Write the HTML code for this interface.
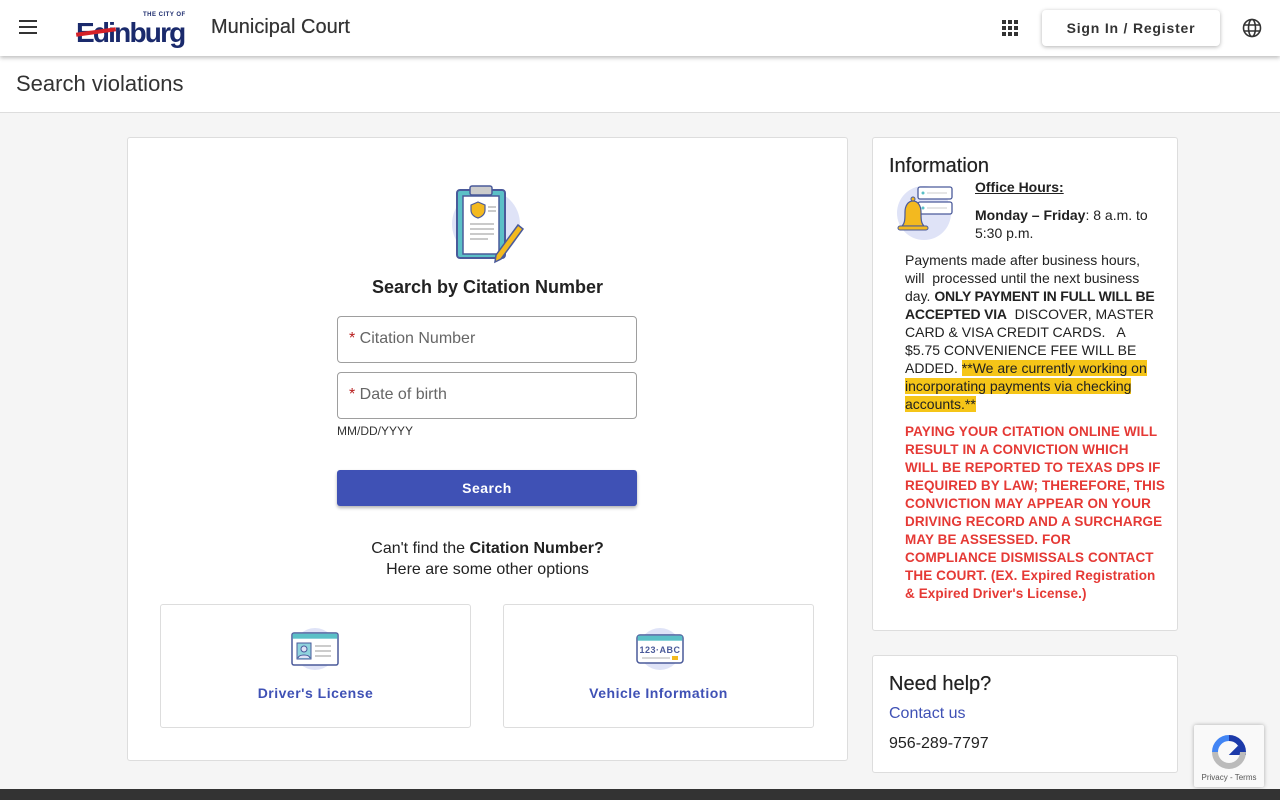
<!DOCTYPE html>
<html><head><meta charset="utf-8"><style>
*{box-sizing:border-box;margin:0;padding:0}
body{width:1280px;height:800px;overflow:hidden;background:#f5f5f5;font-family:"Liberation Sans",Roboto,sans-serif;color:#212121;position:relative}
.hdr{position:absolute;left:0;top:0;width:1280px;height:56px;background:#fff;box-shadow:0 2px 4px rgba(0,0,0,.25);z-index:2}
.ttl{position:absolute;left:0;top:56px;width:1280px;height:57px;background:#fff;border-bottom:1px solid #ddd}
.card{position:absolute;background:#fff;border:1px solid #ddd;border-radius:3px}
.inp{position:absolute;left:337px;width:300px;height:47px;border:1px solid #9e9e9e;border-radius:4px;font-size:16px;color:#666;padding:13px 11px}
.inp b{color:#b71c1c;font-weight:normal}
.opt{position:absolute;top:604px;width:311px;height:124px;border:1px solid #ddd;border-radius:3px;background:#fff;text-align:center;color:#3f51b5;font-size:14px;font-weight:bold;letter-spacing:.5px}
.info{font-size:14px;line-height:18px;letter-spacing:0}
.red{color:#e53935;font-weight:bold;letter-spacing:.1px;white-space:nowrap}
</style></head><body>
<div class="hdr">
 <div style="position:absolute;left:19px;top:20px;width:18px;height:2px;background:#333;box-shadow:0 6px 0 #333,0 12px 0 #333"></div>
 <div style="position:absolute;left:76px;top:8px;width:120px;height:40px">
  <div style="position:absolute;left:67px;top:4px;font-size:6px;color:#1a2a6c;letter-spacing:.5px;font-weight:bold">THE CITY OF</div>
  <div style="position:absolute;left:0;top:9px;font-size:28px;font-weight:bold;color:#1a2a6c;letter-spacing:-1.8px;font-family:'Liberation Sans',sans-serif">Edinburg</div>
  <div style="position:absolute;left:0;top:22px;width:40px;height:4px;background:#d42027;transform:rotate(-8deg)"></div>
 </div>
 <div style="position:absolute;left:211px;top:16px;font-size:20px;color:#333;text-shadow:0 0 .4px #333">Municipal Court</div>
 <svg style="position:absolute;left:1002px;top:20px" width="16" height="16" viewBox="0 0 16 16" fill="#333"><rect x="0" y="0" width="4" height="4"/><rect x="6" y="0" width="4" height="4"/><rect x="12" y="0" width="4" height="4"/><rect x="0" y="6" width="4" height="4"/><rect x="6" y="6" width="4" height="4"/><rect x="12" y="6" width="4" height="4"/><rect x="0" y="12" width="4" height="4"/><rect x="6" y="12" width="4" height="4"/><rect x="12" y="12" width="4" height="4"/></svg>
 <div style="position:absolute;left:1042px;top:10px;width:178px;height:36px;border-radius:4px;box-shadow:0 1px 4px rgba(0,0,0,.3);font-size:14px;font-weight:bold;letter-spacing:.8px;color:#333;text-align:center;line-height:36px">Sign In / Register</div>
 <svg style="position:absolute;left:1242px;top:18px" width="20" height="20" viewBox="0 0 20 20" fill="none" stroke="#333" stroke-width="1.6"><circle cx="10" cy="10" r="8.5"/><ellipse cx="10" cy="10" rx="3.5" ry="8.5"/><path d="M2 7h16M2 13h16"/></svg>
</div>
<div class="ttl"><div style="position:absolute;left:16px;top:15px;font-size:22px;color:#333">Search violations</div></div>

<div class="card" style="left:127px;top:137px;width:721px;height:624px"></div>
<svg style="position:absolute;left:448px;top:180px" width="80" height="85" viewBox="0 0 80 85">
 <circle cx="38" cy="44" r="34" fill="#dfe3f7"/>
 <rect x="9" y="10" width="48" height="68" rx="3" fill="#5bc0c7" stroke="#4a5a9a" stroke-width="2"/>
 <rect x="15" y="16" width="36" height="58" fill="#fff" stroke="#4a5a9a" stroke-width="1.5"/>
 <rect x="22" y="6" width="22" height="9" rx="2" fill="#ccc" stroke="#4a5a9a" stroke-width="1.5"/>
 <path d="M23 25l7-3 7 3v5c0 4-3 7-7 8-4-1-7-4-7-8z" fill="#f3b91f" stroke="#4a5a9a" stroke-width="1.2"/>
 <path d="M40 27h8M40 31h8M22 44h24M22 49h24M22 54h24M22 59h18" stroke="#aaa" stroke-width="1.2"/>
 <path d="M70 45l5 4-22 30-6 3 1-7z" fill="#f3b91f" stroke="#4a5a9a" stroke-width="1.5"/>
</svg>
<div style="position:absolute;left:127px;width:721px;top:277px;text-align:center;font-size:18px;font-weight:bold;color:#222">Search by Citation Number</div>
<div class="inp" style="top:316px"><b>*</b> Citation Number</div>
<div class="inp" style="top:372px"><b>*</b> Date of birth</div>
<div style="position:absolute;left:337px;top:424px;font-size:12px;color:#333">MM/DD/YYYY</div>
<div style="position:absolute;left:337px;top:470px;width:300px;height:36px;background:#3f51b5;border-radius:3px;box-shadow:0 2px 3px rgba(0,0,0,.3);color:#fff;font-size:14px;font-weight:bold;text-align:center;line-height:36px;letter-spacing:.5px">Search</div>
<div style="position:absolute;left:127px;width:721px;top:538px;text-align:center;font-size:16px;line-height:21px;color:#222">Can't find the <b>Citation Number?</b><br>Here are some other options</div>
<div class="opt" style="left:160px">
 <svg style="position:absolute;left:128px;top:22px" width="52" height="44" viewBox="0 0 52 44"><circle cx="26" cy="22" r="21" fill="#dfe3f7"/><rect x="3" y="6" width="46" height="32" rx="2" fill="#fff" stroke="#4a5a9a" stroke-width="1.5"/><rect x="3.7" y="6.7" width="44.6" height="5" fill="#5bc0c7"/><rect x="8" y="16" width="14" height="16" fill="#8fd3dd" stroke="#4a5a9a"/><circle cx="15" cy="22" r="3" fill="#dfe3f7" stroke="#4a5a9a"/><path d="M9 31c1-4 11-4 12 0" fill="#dfe3f7" stroke="#4a5a9a"/><path d="M26 19h16M26 24h16M26 29h16" stroke="#ccc" stroke-width="2"/></svg>
 <div style="position:absolute;left:0;right:0;top:80px">Driver's License</div>
</div>
<div class="opt" style="left:503px">
 <svg style="position:absolute;left:130px;top:22px" width="52" height="44" viewBox="0 0 52 44"><circle cx="26" cy="22" r="21" fill="#dfe3f7"/><rect x="3" y="8" width="46" height="28" rx="3" fill="#fff" stroke="#4a5a9a" stroke-width="1.5"/><rect x="3.7" y="8.7" width="44.6" height="5" fill="#5bc0c7"/><text x="26" y="26" font-size="9" font-weight="bold" fill="#4a5a9a" text-anchor="middle" font-family="Liberation Sans">123·ABC</text><path d="M8 31h28" stroke="#ccc" stroke-width="1.5"/><rect x="38" y="29" width="6" height="4" fill="#f3b91f"/></svg>
 <div style="position:absolute;left:0;right:0;top:80px">Vehicle Information</div>
</div>

<div class="card" style="left:872px;top:137px;width:306px;height:494px"></div>
<div style="position:absolute;left:889px;top:155px;font-size:20px;color:#222;text-shadow:0 0 .4px #222">Information</div>
<svg style="position:absolute;left:894px;top:184px" width="62" height="56" viewBox="0 0 62 56"><circle cx="30" cy="29" r="27" fill="#dfe3f7"/><rect x="24" y="3" width="34" height="12" rx="2" fill="#fff" stroke="#4a5a9a" stroke-width="1.3"/><rect x="24" y="18" width="34" height="12" rx="2" fill="#fff" stroke="#4a5a9a" stroke-width="1.3"/><circle cx="29" cy="9" r="1.5" fill="#5bc0c7"/><circle cx="29" cy="24" r="1.5" fill="#5bc0c7"/><path d="M33 9h20M33 24h20" stroke="#ccc"/><path d="M8 42c3-3 3-7 3-14 0-6 3-11 8-11s8 5 8 11c0 7 0 11 3 14z" fill="#f3b91f" stroke="#4a5a9a" stroke-width="1.2"/><rect x="4" y="42" width="30" height="4" rx="2" fill="#f3b91f" stroke="#4a5a9a"/><circle cx="19" cy="15" r="2" fill="#f3b91f" stroke="#4a5a9a"/></svg>
<div class="info" style="position:absolute;left:975px;top:178px;width:190px">
 <div style="font-weight:bold;text-decoration:underline">Office Hours:</div>
 <div style="margin-top:10px"><b>Monday – Friday</b>: 8 a.m. to 5:30 p.m.</div>
</div>
<div class="info" style="position:absolute;left:905px;top:251px;width:256px">Payments made after business hours, will&nbsp; processed until the next business day. <b style="letter-spacing:-.2px">ONLY PAYMENT IN FULL WILL BE ACCEPTED VIA</b>&nbsp; DISCOVER, MASTER CARD &amp; VISA CREDIT CARDS.&nbsp;&nbsp; A $5.75 CONVENIENCE FEE WILL BE ADDED. <span style="background:#f5c518">**We are currently working on incorporating payments via checking accounts.**</span>
<div class="red" style="margin-top:10px;font-size:13.5px">PAYING YOUR CITATION ONLINE WILL<br>RESULT IN A CONVICTION WHICH<br>WILL BE REPORTED TO TEXAS DPS IF<br>REQUIRED BY LAW; THEREFORE, THIS<br>CONVICTION MAY APPEAR ON YOUR<br>DRIVING RECORD AND A SURCHARGE<br>MAY BE ASSESSED. FOR<br>COMPLIANCE DISMISSALS CONTACT<br>THE COURT. (EX. Expired Registration<br>&amp; Expired Driver's License.)</div></div>

<div class="card" style="left:872px;top:655px;width:306px;height:118px"></div>
<div style="position:absolute;left:889px;top:673px;font-size:20px;color:#222;text-shadow:0 0 .4px #222">Need help?</div>
<div style="position:absolute;left:889px;top:705px;font-size:16px;color:#3f51b5">Contact us</div>
<div style="position:absolute;left:889px;top:735px;font-size:16px;color:#222">956-289-7797</div>

<div style="position:absolute;left:1194px;top:725px;width:70px;height:62px;background:#f9f9f9;box-shadow:0 0 4px rgba(0,0,0,.3);border-radius:2px">
 <svg style="position:absolute;left:16px;top:8px" width="38" height="38" viewBox="0 0 38 38"><path d="M19 5a14 14 0 0 1 14 14h-7l4-4" fill="none" stroke="#1c3aa9" stroke-width="6"/><path d="M5 19A14 14 0 0 1 19 5" fill="none" stroke="#4285f4" stroke-width="6"/><path d="M33 19A14 14 0 0 1 5 19" fill="none" stroke="#bbb" stroke-width="6"/></svg>
 <div style="position:absolute;left:0;right:0;top:48px;font-size:8px;color:#555;text-align:center">Privacy - Terms</div>
</div>
<div style="position:absolute;left:0;top:789px;width:1280px;height:11px;background:#333"></div>
</body></html>
